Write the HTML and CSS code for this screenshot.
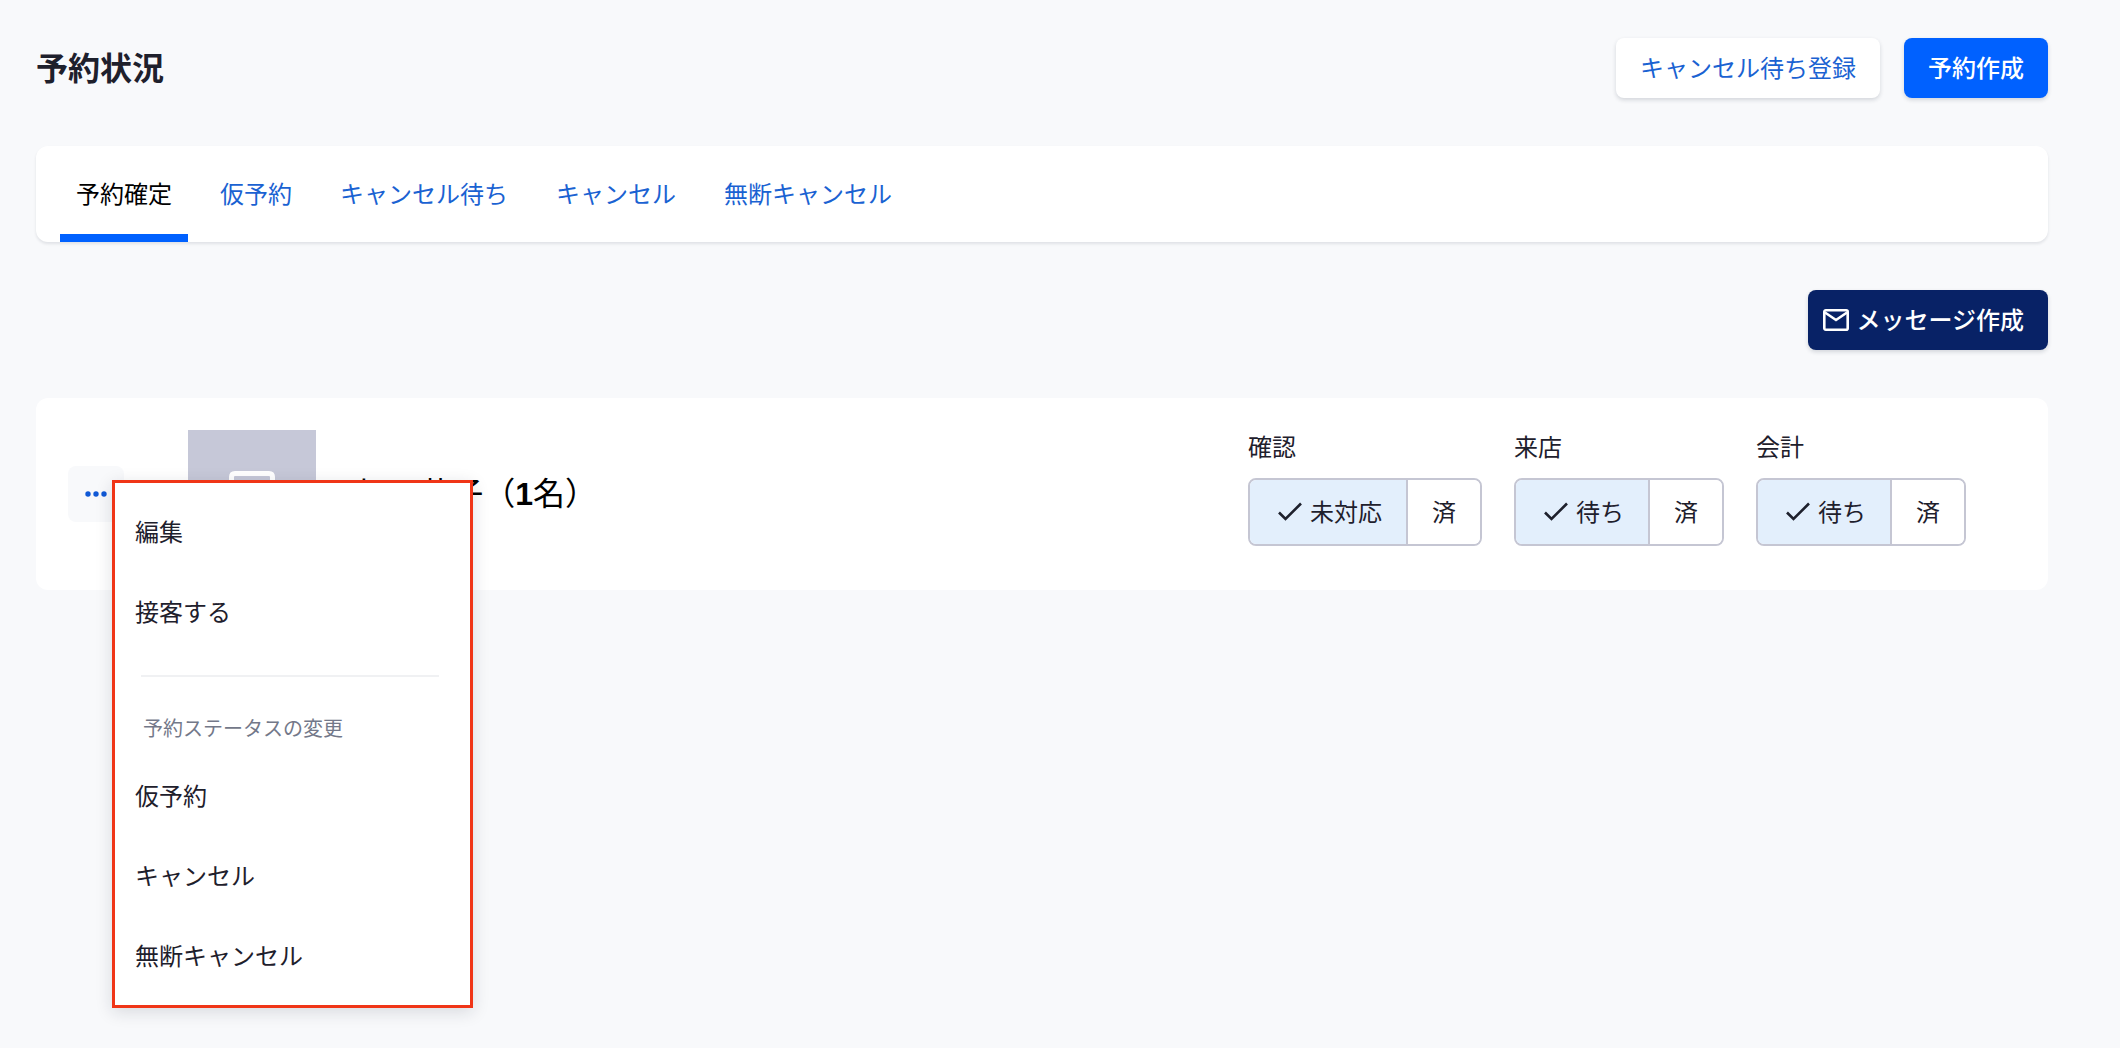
FILE: index.html
```html
<!DOCTYPE html>
<html lang="ja">
<head>
<meta charset="utf-8">
<title>予約状況</title>
<meta name="viewport" content="width=device-width, initial-scale=1">
<link rel="stylesheet" href="styles.css">
</head>
<body>
<main class="page">
  <header class="page-header">
    <h1 class="page-title">予約状況</h1>
    <div class="header-actions">
      <button type="button" class="btn btn-plain">キャンセル待ち登録</button>
      <button type="button" class="btn btn-primary">予約作成</button>
    </div>
  </header>

  <nav class="tabs" aria-label="予約状況">
    <a href="#confirmed" class="tab tab-active" aria-current="page">予約確定</a>
    <a href="#tentative" class="tab">仮予約</a>
    <a href="#waiting" class="tab">キャンセル待ち</a>
    <a href="#cancelled" class="tab">キャンセル</a>
    <a href="#no-show" class="tab">無断キャンセル</a>
  </nav>

  <div class="toolbar">
    <button type="button" class="btn btn-dark">
      <svg class="icon-mail" viewBox="0 0 28 28" aria-hidden="true"><rect x="2.3" y="5.3" width="23.4" height="19.4" rx="1.5"/><path d="M3 7.5 14 15 25 7.5"/></svg>
      メッセージ作成
    </button>
  </div>

  <article class="reservation">
    <div class="menu-anchor">
      <button type="button" class="more" aria-label="メニュー" aria-expanded="true">
        <svg class="icon-dots" viewBox="0 0 24 24" aria-hidden="true"><circle cx="4" cy="12" r="2.7"/><circle cx="12" cy="12" r="2.7"/><circle cx="20" cy="12" r="2.7"/></svg>
      </button>
      <div class="menu">
        <button type="button" class="menu-item">編集</button>
        <button type="button" class="menu-item">接客する</button>
        <hr class="menu-divider">
        <p class="menu-label">予約ステータスの変更</p>
        <button type="button" class="menu-item">仮予約</button>
        <button type="button" class="menu-item">キャンセル</button>
        <button type="button" class="menu-item">無断キャンセル</button>
      </div>
    </div>
    <div class="thumb">
      <svg class="icon-camera" viewBox="0 0 128 128" aria-hidden="true"><path d="M43.5 56V47Q43.5 43.5 47 43.5H81Q84.500 43.5 84.5 47V56H92V84H36V56Z"/></svg>
    </div>
    <h2 class="guest">山田 花子（<b class="count">1</b>名）</h2>
    <div class="statuses">
      <section class="status">
        <h3 class="status-title">確認</h3>
        <div class="segmented">
          <button type="button" class="segment segment-on" aria-pressed="true"><svg class="icon-check" viewBox="0 0 24 24" aria-hidden="true"><path d="M1 13.500 7.500 20 23 4.500"/></svg>未対応</button>
          <button type="button" class="segment" aria-pressed="false">済</button>
        </div>
      </section>
      <section class="status">
        <h3 class="status-title">来店</h3>
        <div class="segmented">
          <button type="button" class="segment segment-on" aria-pressed="true"><svg class="icon-check" viewBox="0 0 24 24" aria-hidden="true"><path d="M1 13.500 7.500 20 23 4.500"/></svg>待ち</button>
          <button type="button" class="segment" aria-pressed="false">済</button>
        </div>
      </section>
      <section class="status">
        <h3 class="status-title">会計</h3>
        <div class="segmented">
          <button type="button" class="segment segment-on" aria-pressed="true"><svg class="icon-check" viewBox="0 0 24 24" aria-hidden="true"><path d="M1 13.500 7.500 20 23 4.500"/></svg>待ち</button>
          <button type="button" class="segment" aria-pressed="false">済</button>
        </div>
      </section>
    </div>
  </article>
</main>
</body>
</html>
```
FILE: styles.css
```css
* {
  box-sizing: border-box;
}

body {
  margin: 0;
  background: #f8f9fb;
  color: #1e202c;
  font: 24px/36px "Noto Sans CJK JP", sans-serif;
}

button {
  margin: 0;
  border: 0;
  color: inherit;
  font: inherit;
  white-space: nowrap;
  cursor: pointer;
}

h1, h2, h3, p {
  margin: 0;
}

.page {
  min-height: 100vh;
  padding: 38px 72px 48px 36px;
}

.page-header {
  display: flex;
  align-items: center;
  justify-content: space-between;
  margin-bottom: 48px;
}

.page-title {
  padding-bottom: 4px;
  font-size: 32px;
  line-height: 48px;
  font-weight: 700;
}

.header-actions {
  display: flex;
  gap: 24px;
}

.btn {
  display: flex;
  align-items: center;
  height: 60px;
  padding: 0 24px 2px;
  border-radius: 8px;
  box-shadow: 0 2px 4px rgba(20, 30, 50, 0.16);
}

.btn-plain {
  background: #fff;
  color: #1a62d2;
}

.btn-primary {
  background: #0061ff;
  color: #fff;
  font-weight: 500;
}

.btn-dark {
  gap: 6px;
  padding-left: 14px;
  background: #082266;
  color: #fff;
  font-weight: 500;
}

.icon-mail {
  width: 28px;
  height: 28px;
  fill: none;
  stroke: currentColor;
  stroke-width: 2.6;
}

.tabs {
  display: flex;
  gap: 16px;
  height: 96px;
  padding: 0 24px;
  border-radius: 12px;
  background: #fff;
  box-shadow: 0 2px 3px rgba(20, 30, 50, 0.1);
}

.tab {
  display: flex;
  align-items: center;
  padding: 6px 16px 0;
  border-bottom: 8px solid transparent;
  color: #1a62d2;
  text-decoration: none;
}

.tab-active {
  border-color: #0061ff;
  color: #000;
}

.toolbar {
  display: flex;
  justify-content: flex-end;
  margin: 48px 0;
}

.reservation {
  display: flex;
  align-items: center;
  padding: 32px 82px 32px 32px;
  border-radius: 12px;
  background: #fff;
}

.menu-anchor {
  position: relative;
}

.more {
  display: flex;
  align-items: center;
  justify-content: center;
  width: 56px;
  height: 56px;
  padding: 0;
  border-radius: 8px;
  background: #f8f9fb;
}

.icon-dots {
  width: 24px;
  height: 24px;
  fill: #1059d6;
}

.menu {
  position: absolute;
  top: 14px;
  left: 44px;
  z-index: 1;
  display: flex;
  flex-direction: column;
  width: 361px;
  padding: 8px 8px 10px;
  border: 3px solid #f03517;
  background: #fff;
  box-shadow: 0 4px 16px rgba(20, 30, 50, 0.14);
}

.menu-item {
  height: 80px;
  padding: 0 12px;
  background: none;
  text-align: left;
}

.menu-divider {
  width: 298px;
  height: 2px;
  margin: 24px 18px;
  border: 0;
  background: #f0f1f3;
}

.menu-label {
  padding: 12px 20px;
  color: #737889;
  font-size: 20px;
  line-height: 30px;
}

.thumb {
  width: 128px;
  height: 128px;
  margin-left: 64px;
  background: #c6c8d8;
}

.icon-camera {
  display: block;
  fill: none;
  stroke: #fff;
  stroke-width: 5;
}

.guest {
  flex: 1;
  margin-left: 32px;
  padding-bottom: 4px;
  color: #000;
  font-size: 32px;
  line-height: 48px;
  font-weight: 400;
}

.count {
  font-family: "Liberation Sans", sans-serif;
}

.statuses {
  display: flex;
  align-self: flex-start;
  gap: 32px;
}

.status-title {
  margin-bottom: 16px;
  font-size: 24px;
  line-height: 32px;
  font-weight: 400;
}

.segmented {
  display: flex;
  height: 68px;
  overflow: hidden;
  border: 2px solid #c5c6d3;
  border-radius: 8px;
}

.segment {
  display: flex;
  align-items: center;
  gap: 8px;
  padding: 0 24px 2px;
  background: #fff;
}

.segment-on {
  padding-left: 28px;
  border-right: 2px solid #c5c6d3;
  background: #e3effc;
}

.icon-check {
  width: 24px;
  height: 24px;
  fill: none;
  stroke: currentColor;
  stroke-width: 2.6;
}
```
